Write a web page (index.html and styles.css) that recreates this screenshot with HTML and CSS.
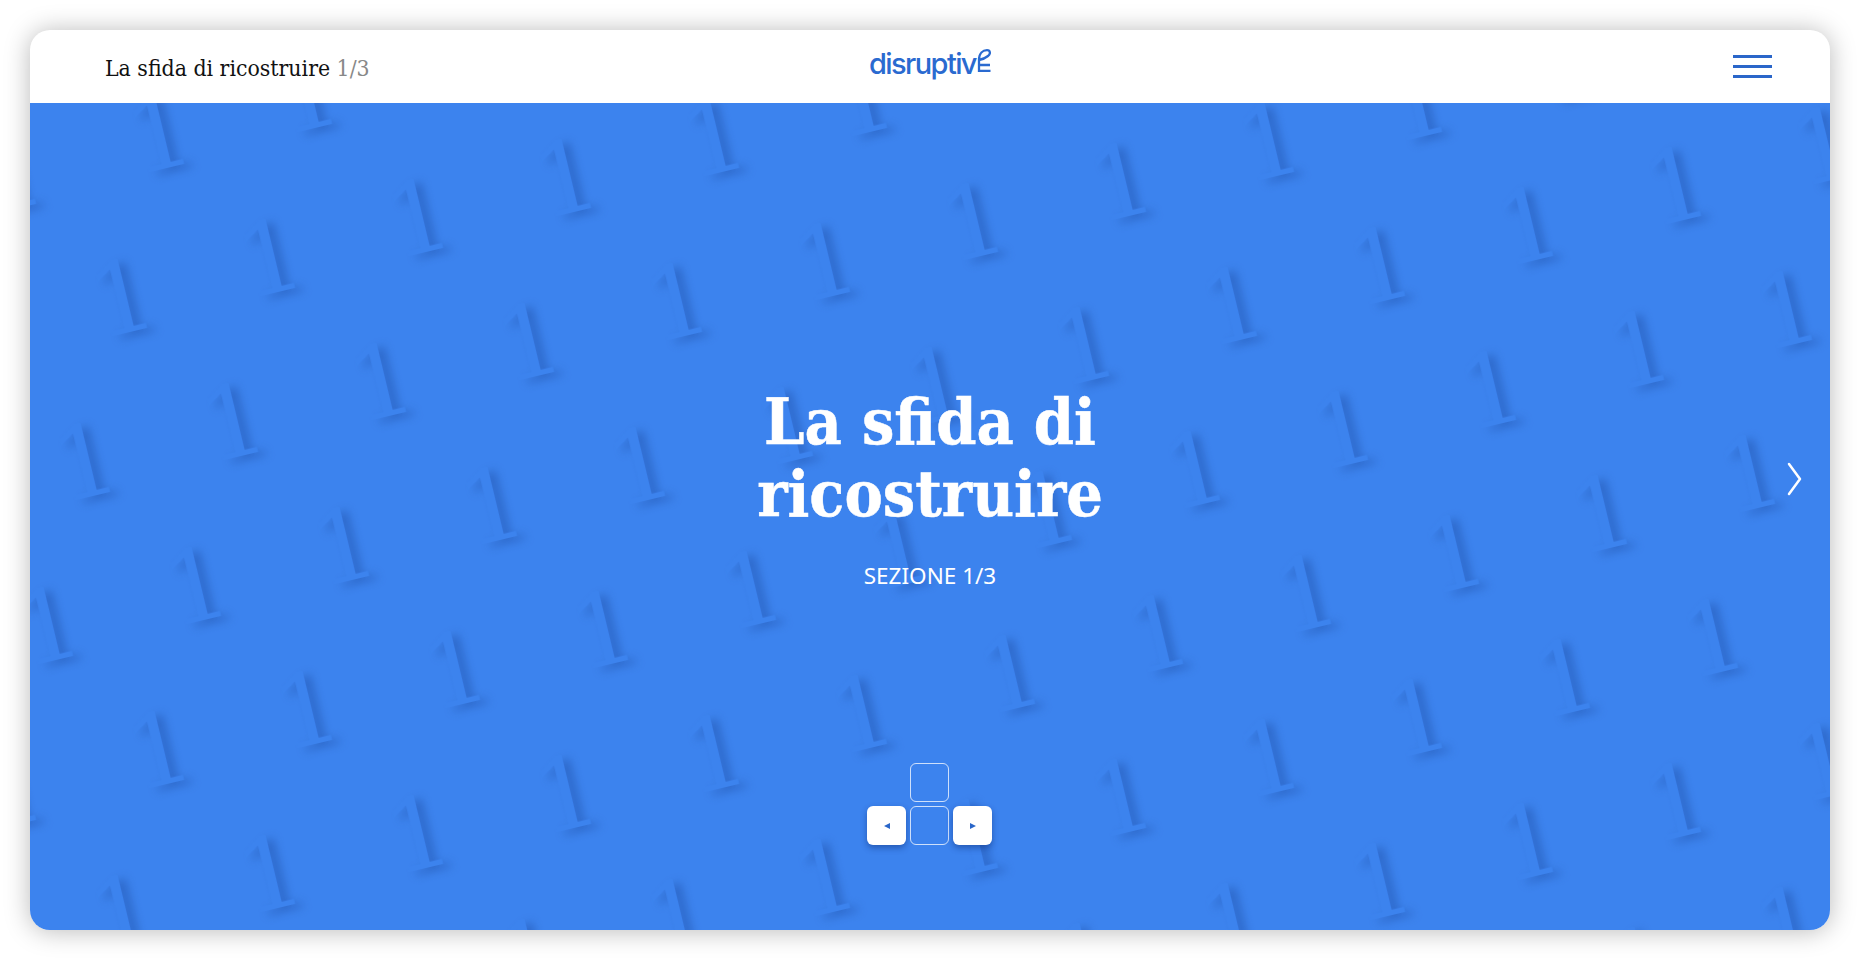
FILE: index.html
```html
<!DOCTYPE html>
<html lang="it">

<head>
    <meta charset="UTF-8">
    <meta name="viewport" content="width=device-width, initial-scale=1.0">
    <title>La sfida di ricostruire</title>
    <link rel="stylesheet" href="styles.css">
</head>

<body>
    <main class="card">
        <header class="topbar">
            <p class="crumb">La sfida di ricostruire <span class="crumb-count">1/3</span></p>
            <a class="logo" href="#">disruptiv<svg class="logo-e" width="14" height="23" viewBox="0 0 14 23" aria-hidden="true">
                    <path d="M2 11 C2 4 6 1.2 10 1.2 C13.5 1.2 13.8 5 11 7 C8.5 9 5 10.5 2 11 V21.8 H13.5 M2 16 H13" fill="none" stroke="currentColor" stroke-width="2.3"/>
                </svg></a>
            <button class="burger" aria-label="Menu"><span></span><span></span><span></span></button>
        </header>

        <section class="hero">
            <!-- sfondo con gli "1" -->
            <svg class="pattern" id="pattern" width="1800" height="827" aria-hidden="true"></svg>

            <div class="intro">
                <h1 class="intro-title">La sfida di<br>ricostruire</h1>
                <p class="intro-sub">SEZIONE 1/3</p>
            </div>

            <div class="keys">
                <span class="key key-up"></span>
                <span class="key key-on key-left"><i class="arrow arrow-left"></i></span>
                <span class="key"></span>
                <span class="key key-on"><i class="arrow arrow-right"></i></span>
            </div>

            <a class="next" href="#" aria-label="Avanti">
                <svg width="16" height="34" viewBox="0 0 16 34">
                    <path d="M2 2 L13 17 L2 32" fill="none" stroke="#fff" stroke-width="2.5" stroke-linecap="round" stroke-linejoin="round"/>
                </svg>
            </a>
        </section>
    </main>

    <script src="pattern.js"></script>
</body>

</html>
```

FILE: styles.css
```css
* {
    box-sizing: border-box;
}

body {
    margin: 0;
    padding: 30px;
    background-color: #fff;
}

.card {
    width: 1800px;
    height: 900px;
    display: flex;
    flex-direction: column;
    border-radius: 20px;
    overflow: hidden;
    background-color: #fff;
    box-shadow: 0 1px 26px rgba(0, 0, 0, .28);
}

.topbar {
    height: 73px;
    flex: none;
    display: grid;
    grid-template-columns: 1fr auto 1fr;
    align-items: center;
    padding: 0 58px;
}

.crumb {
    margin: 3px 0 0 17px;
    font: 22.8px "DejaVu Serif Condensed", "DejaVu Serif", serif;
    color: #111;
}

.crumb-count {
    color: #888;
}

.logo {
    display: flex;
    align-items: flex-end;
    font: 500 29px/1 Inter, sans-serif;
    letter-spacing: -1.6px;
    color: #2a6ad0;
    text-decoration: none;
    margin-top: -6px;
}

.logo-e {
    margin: 0 0 6px 1px;
}

.burger {
    justify-self: end;
    width: 39px;
    display: flex;
    flex-direction: column;
    gap: 6.5px;
    padding: 0;
    border: 0;
    background: none;
}

.burger span {
    height: 3.5px;
    background-color: #2a66c9;
}

.hero {
    position: relative;
    flex: 1;
    display: flex;
    flex-direction: column;
    align-items: center;
    padding: 283px 0 85px;
    background-color: #3c83ee;
    overflow: hidden;
}

.pattern {
    position: absolute;
    top: 0;
    left: 0;
}

.pattern text {
    font: 400 100px "DejaVu Serif", serif;
    fill: #3c83ee;
    filter: drop-shadow(7px 5px 5px rgba(24, 66, 150, .42));
}

.intro {
    position: relative;
    text-align: center;
    color: #fff;
}

.intro-title {
    margin: 0;
    font: 700 64px/72px "DejaVu Serif Condensed", "DejaVu Serif", serif;
    -webkit-text-stroke: .5px #fff;
}

.intro-sub {
    margin: 32px 0 0;
    font: 22.5px/28px "Noto Sans", sans-serif;
}

.keys {
    position: relative;
    margin: auto 0 0 -1px;
    display: grid;
    grid-template-columns: repeat(3, 39px);
    grid-auto-rows: 39px;
    gap: 4px;
}

.key {
    display: flex;
    align-items: center;
    justify-content: center;
    border: 1px solid rgba(255, 255, 255, .75);
    border-radius: 6px;
}

.key-up {
    grid-column: 2;
}

.key-left {
    grid-column: 1;
}

.key-on {
    border: 0;
    background-color: #fff;
    box-shadow: 0 3px 6px rgba(10, 40, 110, .45);
}

.arrow {
    width: 0;
    height: 0;
    border-top: 3px solid transparent;
    border-bottom: 3px solid transparent;
}

.arrow-left {
    border-right: 6px solid #2a66c9;
}

.arrow-right {
    border-left: 6px solid #2a66c9;
}

.next {
    position: absolute;
    top: 359px;
    right: 27px;
    line-height: 0;
}
```

FILE: pattern.js
```js
// griglia inclinata di "1" dietro al titolo
let svg = document.querySelector('#pattern'),
    ns = 'http://www.w3.org/2000/svg',
    ax = 148, ay = -40,
    bx = -37, by = 164,
    startX = 100, startY = 229; // piede di un "1" di riferimento

for (let i = -8; i < 20; i++) {
    for (let j = -8; j < 16; j++) {
        let x = startX + ax * i + bx * j,
            y = startY + ay * i + by * j;

        if (x < -60 || x > 1860 || y < -10 || y > 920) continue;

        let one = document.createElementNS(ns, 'text');
        one.textContent = '1';
        one.setAttribute('text-anchor', 'middle');
        one.setAttribute('transform', 'translate(' + x + ' ' + y + ') rotate(-13.5)');
        svg.appendChild(one);
    }
}
```
